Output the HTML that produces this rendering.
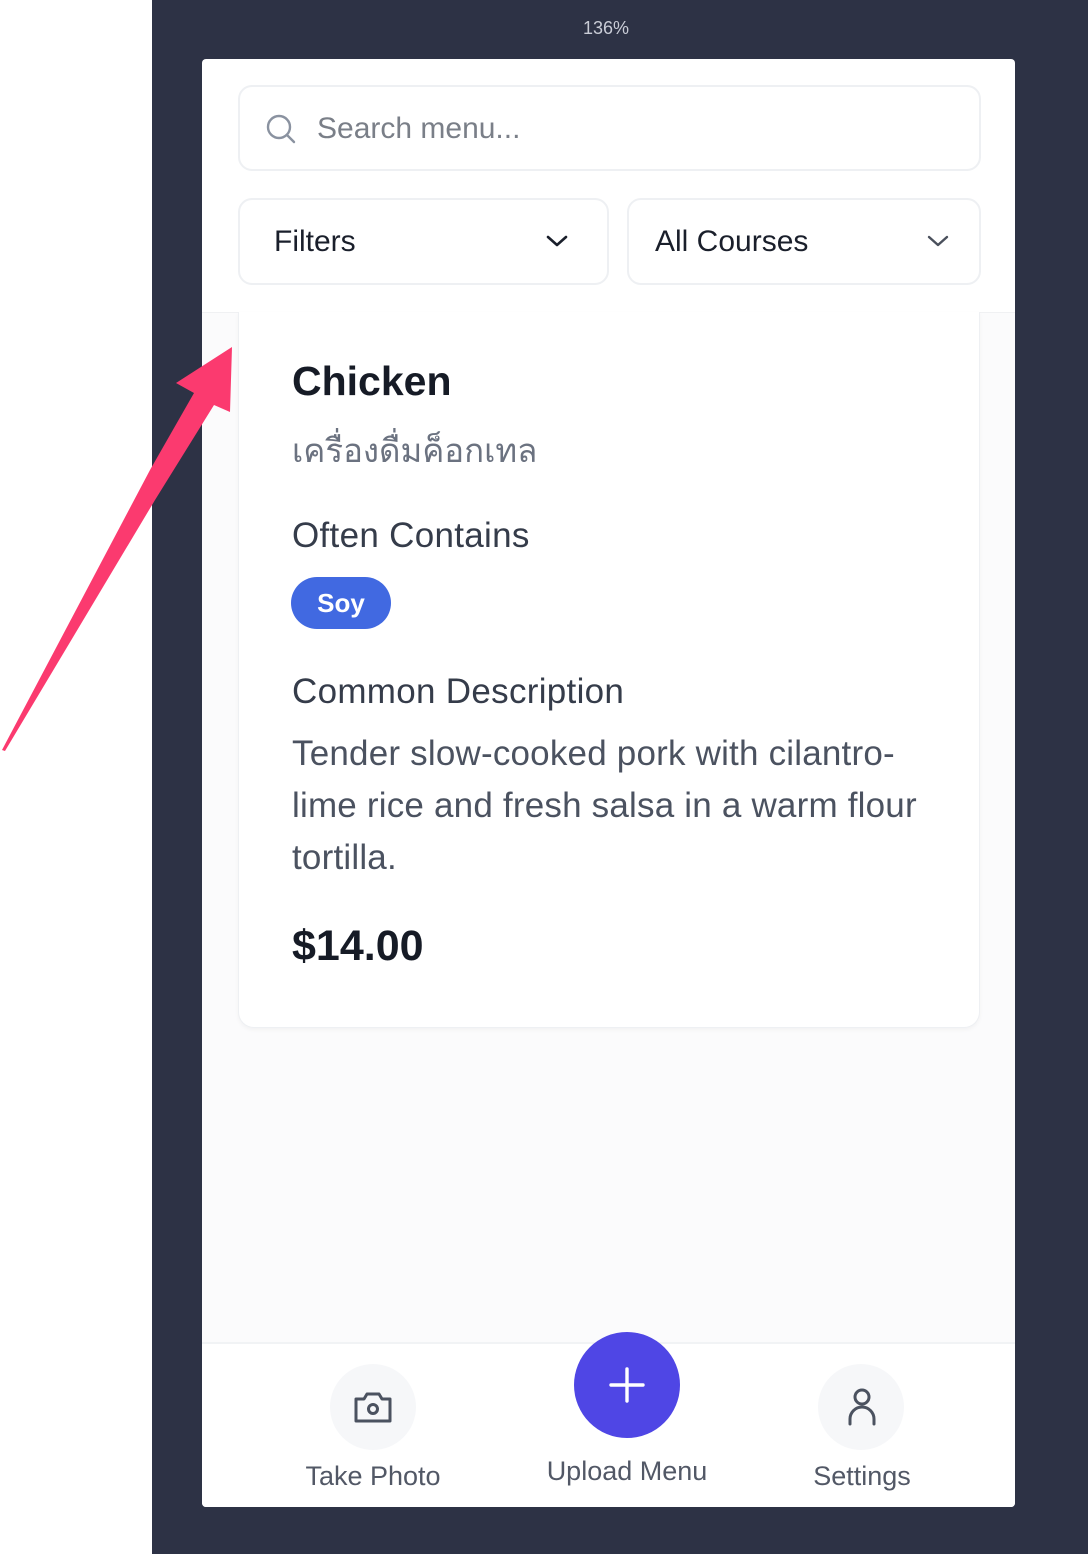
<!DOCTYPE html>
<html><head><meta charset="utf-8"><style>
*{margin:0;padding:0;box-sizing:border-box}
body{width:1088px;height:1554px;position:relative;background:#fff;font-family:"Liberation Sans",sans-serif;overflow:hidden}
.dark{position:absolute;left:152px;top:0;width:936px;height:1554px;background:#2d3245}
.zoom{position:absolute;left:583px;top:18px;color:#c9ccd6;font-size:18px}
.panel{position:absolute;left:202px;top:59px;width:813px;height:1448px;background:#fff;border-radius:4px;overflow:hidden}
.list{position:absolute;left:0;top:253px;width:813px;height:1030px;background:#fbfbfc;border-top:1px solid #f0f1f3}
.box{position:absolute;border:2px solid #eef0f3;border-radius:14px;background:#fff}
.t{position:absolute;white-space:nowrap}
.card{position:absolute;left:36px;top:253px;width:742px;height:716px;background:#fff;border:1px solid #eef0f3;border-top:none;border-radius:0 0 16px 16px;box-shadow:0 2px 4px rgba(0,0,0,0.04)}
.nav{position:absolute;left:0;top:1283px;width:813px;height:165px;background:#fff;border-top:2px solid #f1f3f5}
.circ{position:absolute;width:86px;height:86px;border-radius:50%;background:#f6f7f9}
.lbl{position:absolute;font-size:27px;color:#525866;text-align:center;width:240px}
</style></head><body>
<div class="dark"></div>
<div class="zoom">136%</div>
<div class="panel">
 <div class="list"></div>
 <div class="box" style="left:36px;top:26px;width:743px;height:86px"></div>
 <svg style="position:absolute;left:63px;top:54px" width="32" height="32" viewBox="0 0 32 32" fill="none" stroke="#8a92a0" stroke-width="2.4" stroke-linecap="round"><circle cx="14" cy="14" r="11"/><path d="M22 22l7 7"/></svg>
 <div class="t" style="left:115px;top:53px;font-size:30px;color:#7a7f88">Search menu...</div>
 <div class="box" style="left:36px;top:139px;width:371px;height:87px"></div>
 <div class="t" style="left:72px;top:166px;font-size:30px;color:#1a1f2b">Filters</div>
 <svg style="position:absolute;left:343px;top:174px" width="24" height="16" viewBox="0 0 24 16" fill="none" stroke="#1a1f2b" stroke-width="2.6" stroke-linecap="round" stroke-linejoin="round"><path d="M3 4l9 8 9-8"/></svg>
 <div class="box" style="left:425px;top:139px;width:354px;height:87px"></div>
 <div class="t" style="left:453px;top:166px;font-size:30px;color:#1a1f2b">All Courses</div>
 <svg style="position:absolute;left:724px;top:174px" width="24" height="16" viewBox="0 0 24 16" fill="none" stroke="#4a505c" stroke-width="2.4" stroke-linecap="round" stroke-linejoin="round"><path d="M3 4l9 8 9-8"/></svg>
 <div class="card">
  <div class="t" style="left:53px;top:46px;font-size:41px;font-weight:bold;color:#161b26">Chicken</div>
  <div class="t" style="left:53px;top:112px;font-size:33px;color:#6b7280">เครื่องดื่มค็อกเทล</div>
  <div class="t" style="left:53px;top:204px;font-size:35px;color:#353c4a;letter-spacing:0.3px">Often Contains</div>
  <div class="t" style="left:52px;top:265px;width:100px;height:52px;border-radius:26px;background:#4169e1;color:#fff;font-size:26px;font-weight:bold;text-align:center;line-height:52px">Soy</div>
  <div class="t" style="left:53px;top:360px;font-size:35px;color:#353c4a;letter-spacing:0.3px">Common Description</div>
  <div style="position:absolute;left:53px;top:416px;width:650px;font-size:35px;letter-spacing:0.2px;line-height:52px;color:#4b5260">Tender slow-cooked pork with cilantro-lime rice and fresh salsa in a warm flour tortilla.</div>
  <div class="t" style="left:53px;top:610px;font-size:43px;font-weight:bold;color:#161b26">$14.00</div>
 </div>
 <div class="nav">
  <div class="circ" style="left:128px;top:20px"></div>
  <svg style="position:absolute;left:150px;top:43px" width="42" height="40" viewBox="0 0 42 40" fill="none" stroke="#4b5260" stroke-width="3" stroke-linejoin="round"><path d="M4 12h8l3-5h12l3 5h8v22H4z"/><circle cx="21" cy="22" r="4.5"/></svg>
  <div class="lbl" style="left:51px;top:117px">Take Photo</div>
  <div style="position:absolute;left:372px;top:-12px;width:106px;height:106px;border-radius:50%;background:#4f46e5"></div>
  <svg style="position:absolute;left:405px;top:21px" width="40" height="40" viewBox="0 0 40 40" stroke="#fff" stroke-width="3.4" stroke-linecap="round"><path d="M20 4v32M4 20h32"/></svg>
  <div class="lbl" style="left:305px;top:112px">Upload Menu</div>
  <div class="circ" style="left:616px;top:20px"></div>
  <svg style="position:absolute;left:642px;top:42px" width="36" height="42" viewBox="0 0 36 42" fill="none" stroke="#4b5260" stroke-width="3" stroke-linecap="round"><circle cx="18" cy="11" r="7"/><path d="M6 38v-5a12 12 0 0 1 24 0v5"/></svg>
  <div class="lbl" style="left:540px;top:117px">Settings</div>
 </div>
</div>
<svg style="position:absolute;left:0;top:0" width="260" height="760"><polygon points="2,750 5,751 155,500 214,405 230,412 232,347 176,383 194,393 150,470" fill="#fb3a6f"/></svg>
</body></html>
